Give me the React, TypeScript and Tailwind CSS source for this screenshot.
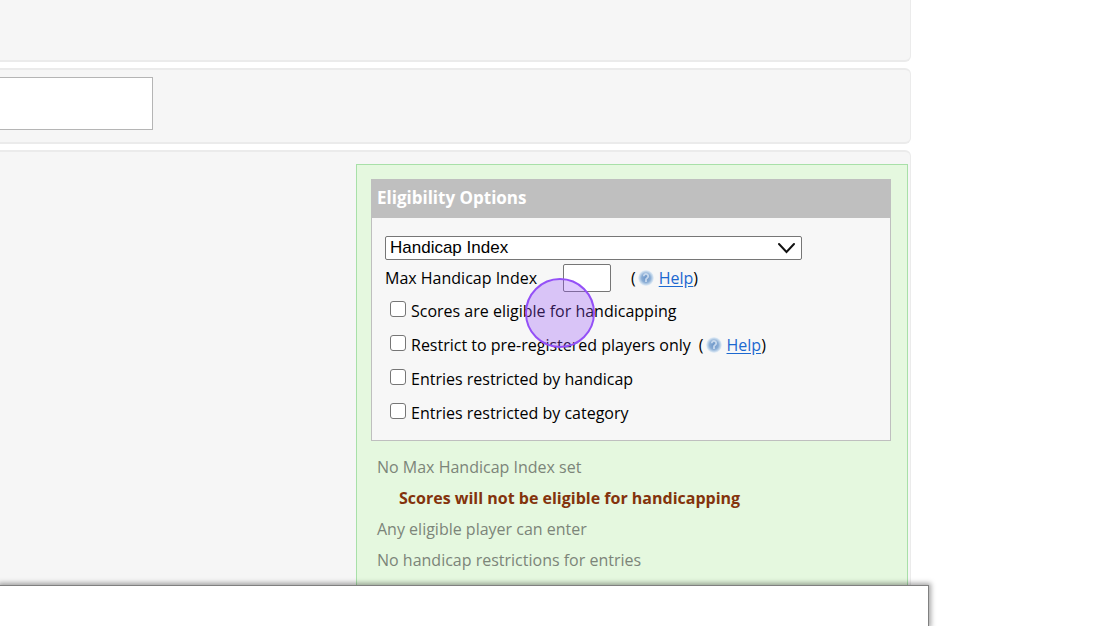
import React from "react";

function HelpLink() {
  return (
    <span className="inline-flex items-center">
      (
      <svg className="mr-[5px] ml-0.5 h-4 w-4" viewBox="0 0 16 16" aria-hidden="true">
        <defs>
          <radialGradient id="orb" cx="50%" cy="50%" r="50%">
            <stop offset="0" stopColor="#6b95c8" />
            <stop offset="0.55" stopColor="#8aadd5" />
            <stop offset="0.8" stopColor="#c0d5ea" />
            <stop offset="1" stopColor="#edf3f9" />
          </radialGradient>
        </defs>
        <circle cx="8" cy="8" r="8" fill="url(#orb)" />
        <path
          d="M5.8 6.2a2.2 2.2 0 1 1 3.4 1.8c-.8.5-1.2.8-1.2 1.6V12"
          fill="none"
          stroke="#dfeaf6"
          strokeOpacity="0.75"
          strokeWidth="1.8"
        />
      </svg>
      <a href="#help" className="text-[#1c68d0] underline underline-offset-2">
        Help
      </a>
      )
    </span>
  );
}

function CheckRow({ id, label, children }: { id: string; label: string; children?: React.ReactNode }) {
  return (
    <div className="flex h-[34px] items-center pl-[5px]">
      <input
        id={id}
        type="checkbox"
        className="mr-[5px] mb-1 h-4 w-4 shrink-0 appearance-none rounded-[3px] border border-[#767676] bg-white checked:bg-[#1c68d0]"
      />
      <label htmlFor={id}>{label}</label>
      {children && <span className="ml-2">{children}</span>}
    </div>
  );
}

export default function App() {
  return (
    <div className="relative h-screen overflow-hidden bg-white font-['Open_Sans',sans-serif] text-[16px] leading-6 text-black">
      <main className="flex h-full flex-col gap-1.5 pr-[209px]">
        <section className="h-[62px] shrink-0 rounded-br-md border-r border-b-2 border-[#ebebeb] bg-[#f6f6f6]" />
        <section className="shrink-0 rounded-r-md border-y-2 border-r border-[#ebebeb] bg-[#f6f6f6] pt-[7px] pb-3">
          <textarea
            aria-label="Notes"
            className="block h-[53px] w-[153px] resize-none border border-l-0 border-[#b5b5b5] bg-white p-2 outline-none"
          />
        </section>
        <section className="flex grow justify-end rounded-tr-md border-t-2 border-r border-[#ebebeb] bg-[#f6f6f6] pt-3 pr-0.5">
          <div className="w-[552px] border border-[#a8e0a8] bg-[#e5f8df] pt-3.5 pr-4 pl-3.5">
            <div className="border border-t-0 border-[#bfbfbf] bg-[#f7f7f7]">
              <h2 className="-mx-px h-[39px] bg-[#bfbfbf] px-1.5 text-[17px] leading-[38px] font-bold text-white">
                Eligibility Options
              </h2>
              <div className="px-[13px] pt-[18px] pb-2.5">
                <div className="relative w-[417px]">
                  <select
                    aria-label="Handicap type"
                    className="block h-6 w-full appearance-none rounded-[2px] border border-[#767676] bg-white pl-1 font-['Liberation_Sans',sans-serif] text-[17px] leading-[22px]"
                  >
                    <option>Handicap Index</option>
                  </select>
                  <svg
                    className="pointer-events-none absolute top-1.5 right-1.5 h-3 w-[18px]"
                    viewBox="0 0 18 12"
                    fill="none"
                    stroke="#111"
                    strokeWidth="2"
                    strokeLinecap="round"
                    aria-hidden="true"
                  >
                    <path d="M1 2l7.5 8L16 2" />
                  </svg>
                </div>
                <div className="mt-0.5 flex h-8 items-center">
                  <label htmlFor="max-index" className="w-[178px]">
                    Max Handicap Index
                  </label>
                  <input
                    id="max-index"
                    type="text"
                    className="mr-5 h-7 w-12 rounded-[2px] border border-[#767676] bg-white px-1"
                  />
                  <HelpLink />
                </div>
                <CheckRow id="eligible" label="Scores are eligible for handicapping" />
                <CheckRow id="preregistered" label="Restrict to pre-registered players only">
                  <HelpLink />
                </CheckRow>
                <CheckRow id="by-handicap" label="Entries restricted by handicap" />
                <CheckRow id="by-category" label="Entries restricted by category" />
              </div>
            </div>
            <div className="pt-[11px] pl-1.5 leading-[31px] text-[#7c8579]">
              <p>No Max Handicap Index set</p>
              <p className="pl-[22px] font-bold text-[#83330c]">Scores will not be eligible for handicapping</p>
              <p>Any eligible player can enter</p>
              <p>No handicap restrictions for entries</p>
            </div>
          </div>
        </section>
      </main>

      <div className="pointer-events-none absolute top-[278px] right-[525px] h-[70px] w-[70px] rounded-full border-2 border-[#9450f7] bg-[#9450f7]/30" />

      <div className="absolute right-[191px] bottom-0 left-0 h-[41px] border-t border-r border-[#808080] bg-white shadow-[0_0_5px_2px_rgba(0,0,0,0.35)]" />
    </div>
  );
}
